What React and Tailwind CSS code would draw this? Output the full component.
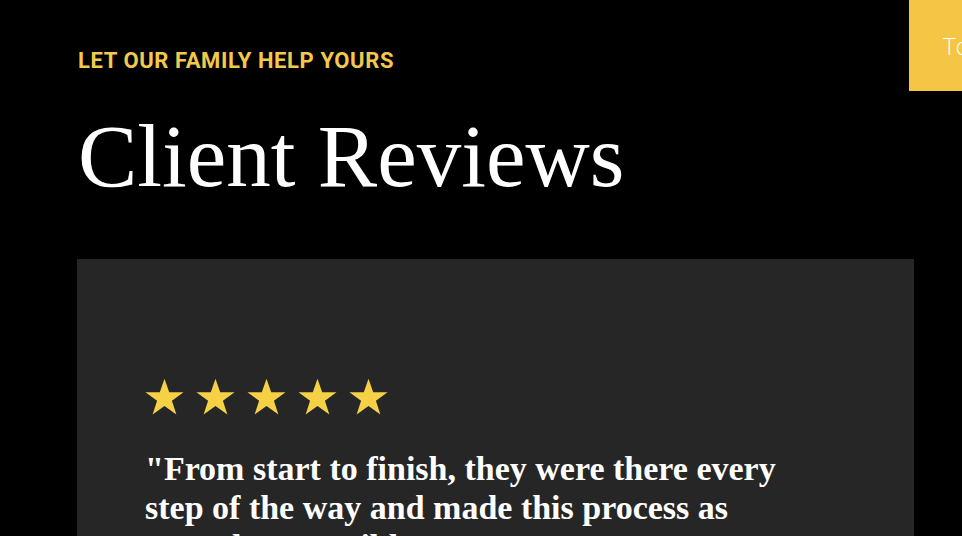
import React from "react";

function Star() {
  return (
    <svg width="41" height="40" viewBox="0 0 24 23" className="shrink-0">
      <path
        d="M12 0.8l2.75 7.95h8.4l-6.8 4.95 2.6 8.05L12 16.8l-6.95 4.95 2.6-8.05-6.8-4.95h8.4z"
        fill="#f6d146"
      />
    </svg>
  );
}

export default function App() {
  return (
    <div className="relative w-[962px] h-[536px] overflow-hidden bg-black">
      <div className="absolute top-0 right-0 w-[53px] h-[91px] bg-[#f5c645] flex items-center pl-[34px] overflow-hidden">
        <span
          className="text-white text-[24px] font-light whitespace-nowrap"
          style={{ fontFamily: "'Open Sans', sans-serif" }}
        >
          To
        </span>
      </div>
      <div className="pl-[77px] pr-[48px] pt-[46px]">
        <div
          className="text-[#f3c94b] text-[22px] font-bold tracking-[0.6px] leading-[30px] pl-[1px]"
          style={{ fontFamily: "Roboto, sans-serif" }}
        >
          LET OUR FAMILY HELP YOURS
        </div>
        <h1
          className="text-white text-[89px] leading-[100px] mt-[30px] pl-[1px]"
          style={{ fontFamily: "'Liberation Serif', serif" }}
        >
          Client Reviews
        </h1>
        <div className="mt-[53px] bg-[#262626] w-[837px] h-[400px] pl-[67px] pt-[118px]">
          <div className="flex gap-[10px]">
            <Star />
            <Star />
            <Star />
            <Star />
            <Star />
          </div>
          <p
            className="text-white font-bold text-[34px] leading-[39px] mt-[32px] w-[660px] pl-[1px]"
            style={{ fontFamily: "'Liberation Serif', serif" }}
          >
            "From start to finish, they were there every step of the way and made this process as smooth as possible."
          </p>
        </div>
      </div>
    </div>
  );
}
